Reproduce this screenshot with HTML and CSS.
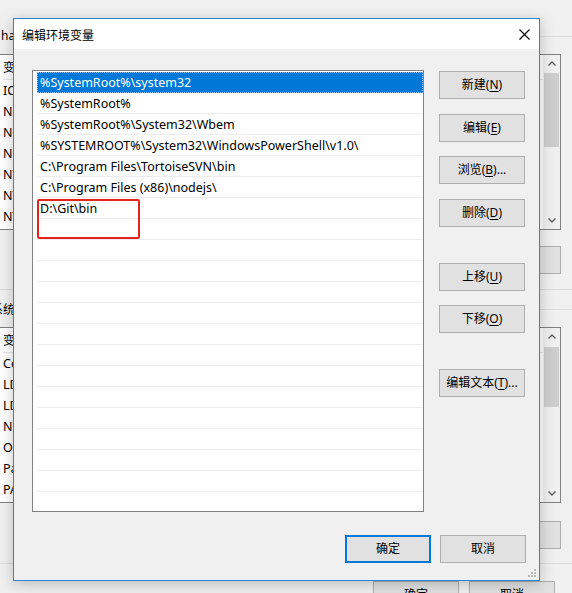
FILE: index.html
```html
<!DOCTYPE html>
<html lang="zh-CN">
<head>
<meta charset="utf-8">
<title>编辑环境变量</title>
<link rel="stylesheet" href="styles.css">
</head>
<body>
<div class="desktop">
  <div class="bgwin">
    <fieldset class="group g1">
      <legend class="glabel first">har 的用户变量(U)</legend>
      <div class="lv">
        <div class="lv-body">
          <div class="lv-head">变量</div>
          <div class="lv-row">IC_HOME</div>
          <div class="lv-row">NODE_PATH</div>
          <div class="lv-row">NODE_HOME</div>
          <div class="lv-row">NPM_HOME</div>
          <div class="lv-row">NTS_HOME</div>
          <div class="lv-row">NTS_PATH</div>
          <div class="lv-row">NTS_ROOT</div>
        </div>
        <div class="sb">
          <div class="sb-btn"><svg width="8" height="5" viewBox="0 0 8 5"><polyline points="0.5,4.5 4,1 7.5,4.5" fill="none" stroke="#606060" stroke-width="1.4"/></svg></div>
          <div class="sb-track"><div class="sb-thumb t1"></div></div>
          <div class="sb-btn"><svg width="8" height="5" viewBox="0 0 8 5"><polyline points="0.5,0.5 4,4 7.5,0.5" fill="none" stroke="#606060" stroke-width="1.4"/></svg></div>
        </div>
      </div>
      <div class="gbtns">
        <button class="btn">新建(<u>N</u>)...</button>
        <button class="btn">编辑(<u>E</u>)...</button>
        <button class="btn">删除(<u>D</u>)</button>
      </div>
    </fieldset>
    <fieldset class="group g2">
      <legend class="glabel">系统变量(S)</legend>
      <div class="lv">
        <div class="lv-body">
          <div class="lv-head">变量</div>
          <div class="lv-row">ComSpec</div>
          <div class="lv-row">LD_PATH</div>
          <div class="lv-row">LD_HOME</div>
          <div class="lv-row">NUMBER_OF_PROCESSORS</div>
          <div class="lv-row">OS</div>
          <div class="lv-row">Path</div>
          <div class="lv-row">PATHEXT</div>
        </div>
        <div class="sb">
          <div class="sb-btn"><svg width="8" height="5" viewBox="0 0 8 5"><polyline points="0.5,4.5 4,1 7.5,4.5" fill="none" stroke="#606060" stroke-width="1.4"/></svg></div>
          <div class="sb-track"><div class="sb-thumb t2"></div></div>
          <div class="sb-btn"><svg width="8" height="5" viewBox="0 0 8 5"><polyline points="0.5,0.5 4,4 7.5,0.5" fill="none" stroke="#606060" stroke-width="1.4"/></svg></div>
        </div>
      </div>
      <div class="gbtns g2btns">
        <button class="btn">新建(<u>W</u>)...</button>
        <button class="btn">编辑(<u>I</u>)...</button>
        <button class="btn">删除(<u>L</u>)</button>
      </div>
    </fieldset>
    <div class="bg-foot">
      <button class="btn">确定</button>
      <button class="btn">取消</button>
    </div>
  </div>

  <div class="dialog">
    <div class="titlebar">
      <span class="title">编辑环境变量</span>
      <span class="close"><svg width="11" height="11" viewBox="0 0 11 11"><path d="M0.5 0.5 L10.5 10.5 M10.5 0.5 L0.5 10.5" stroke="#000" stroke-width="1.1" fill="none"/></svg></span>
    </div>
    <div class="dlg-body">
      <div class="dlg-main">
        <div class="listbox">
          <div class="row sel">%SystemRoot%\system32</div>
          <div class="row">%SystemRoot%</div>
          <div class="row">%SystemRoot%\System32\Wbem</div>
          <div class="row">%SYSTEMROOT%\System32\WindowsPowerShell\v1.0\</div>
          <div class="row">C:\Program Files\TortoiseSVN\bin</div>
          <div class="row">C:\Program Files (x86)\nodejs\</div>
          <div class="row">D:\Git\bin</div>
          <div class="row"></div>
          <div class="row"></div>
          <div class="row"></div>
          <div class="row"></div>
          <div class="row"></div>
          <div class="row"></div>
          <div class="row"></div>
          <div class="row"></div>
          <div class="row"></div>
          <div class="row"></div>
          <div class="row"></div>
          <div class="row"></div>
          <div class="row"></div>
          <div class="row"></div>
          <div class="row"></div>
        </div>
        <div class="side">
          <button class="btn">新建(<u>N</u>)</button>
          <button class="btn">编辑(<u>E</u>)</button>
          <button class="btn">浏览(<u>B</u>)...</button>
          <button class="btn">删除(<u>D</u>)</button>
          <button class="btn spaced">上移(<u>U</u>)</button>
          <button class="btn">下移(<u>O</u>)</button>
          <button class="btn spaced">编辑文本(<u>T</u>)...</button>
        </div>
      </div>
      <div class="dlg-foot">
        <button class="btn default">确定</button>
        <button class="btn">取消</button>
      </div>
    </div>
    <div class="mark"></div>
    <svg class="grip" width="9" height="9" viewBox="0 0 9 9">
      <rect x="6" y="0" width="2" height="2" fill="#bcbcbc"/>
      <rect x="3" y="3" width="2" height="2" fill="#bcbcbc"/>
      <rect x="6" y="3" width="2" height="2" fill="#bcbcbc"/>
      <rect x="0" y="6" width="2" height="2" fill="#bcbcbc"/>
      <rect x="3" y="6" width="2" height="2" fill="#bcbcbc"/>
      <rect x="6" y="6" width="2" height="2" fill="#bcbcbc"/>
    </svg>
  </div>
</div>
</body>
</html>
```

FILE: styles.css
```css
* { box-sizing: border-box; }
html, body { margin: 0; padding: 0; }
body {
  font-family: "Noto Sans", "Noto Sans CJK SC", sans-serif;
  font-size: 12px;
  color: #000;
  background: #f0f0f0;
}
.desktop {
  position: relative;
  width: 572px;
  height: 593px;
  overflow: hidden;
  background: #f0f0f0;
}

/* ---------- background window ---------- */
.bgwin {
  width: 600px;
  margin-left: -20px;
  padding: 28px 0 0 0;
}
.group {
  margin: 0 4px 0 2px;
  padding: 0 14px 15px 7px;
  border: 1px solid #dcdcdc;
  min-width: 0;
}
.g2 { margin-top: 11px; padding-bottom: 14px; }
.glabel {
  padding: 0;
  margin-left: 1px;
  line-height: 16px;
  font-size: 12px;
  font-family: "Noto Sans CJK SC", sans-serif;
}
.glabel.first { margin-left: 11px; font-family: "Noto Sans", "Noto Sans CJK SC", sans-serif; }
.lv {
  margin-top: 10px;
  height: 176px;
  border: 1px solid #828282;
  background: #fff;
  display: flex;
}
.g2 .lv { margin-top: 10px; }
.lv-body { flex: 1; padding-left: 12px; overflow: hidden; }
.lv-head {
  height: 25px;
  line-height: 24px;
  border-bottom: 1px solid #e5e5e5;
  font-family: "Noto Sans CJK SC", sans-serif;
}
.lv-row { height: 21px; line-height: 21px; font-size: 12.5px; white-space: nowrap; }
.sb {
  width: 17px;
  background: #f0f0f0;
  display: flex;
  flex-direction: column;
}
.sb-btn { height: 17px; display: flex; align-items: center; justify-content: center; }
.sb-track { flex: 1; padding: 0 1px; }
.sb-thumb { background: #cdcdcd; }
.t1 { height: 74px; margin-top: 1px; }
.t2 { height: 60px; margin-top: 2px; }
.gbtns {
  display: flex;
  justify-content: flex-end;
  gap: 9px;
  margin-top: 16px;
}
.g2btns { margin-top: 18px; }
.bg-foot {
  display: flex;
  justify-content: flex-end;
  gap: 10px;
  margin-top: 17px;
  padding-right: 25px;
}

.btn {
  width: 86px;
  height: 28px;
  padding: 0;
  border: 1px solid #adadad;
  background: #e1e1e1;
  font-family: "Noto Sans", "Noto Sans CJK SC", sans-serif;
  font-size: 12px;
  color: #000;
  line-height: 26px;
}
.btn u { text-decoration-thickness: 1px; text-underline-offset: 2px; }

/* ---------- foreground dialog ---------- */
.dialog {
  position: absolute;
  left: 13px;
  top: 18px;
  width: 527px;
  height: 563px;
  border: 1px solid #2b87d3;
  background: #f0f0f0;
  box-shadow: 0 3px 14px rgba(0, 0, 0, 0.22);
  display: flex;
  flex-direction: column;
}
.titlebar {
  height: 30px;
  background: #fff;
  display: flex;
  align-items: center;
  justify-content: space-between;
  flex: none;
}
.title {
  padding-left: 8px;
  font-family: "Noto Sans CJK SC", sans-serif;
  font-size: 12px;
}
.close {
  width: 29px;
  height: 30px;
  display: flex;
  align-items: center;
  justify-content: center;
}
.dlg-body {
  flex: 1;
  padding: 21px 13px 0 18px;
  display: flex;
  flex-direction: column;
}
.dlg-main { display: flex; }
.listbox {
  width: 392px;
  height: 442px;
  border: 1px solid #828282;
  background: #fff;
  padding: 1px 0 0 4px;
  overflow: hidden;
}
.row {
  height: 21px;
  line-height: 21px;
  border-bottom: 1px solid #ececec;
  padding-left: 3px;
  font-size: 12.5px;
  white-space: nowrap;
}
.row.sel {
  background: #0078d7;
  color: #fff;
  border-bottom-color: #0078d7;
  outline: 1px dotted rgba(255, 255, 255, 0.55);
  outline-offset: -1px;
}
.side {
  margin-left: 15px;
  padding-top: 1px;
  display: flex;
  flex-direction: column;
  gap: 14.6px;
}
.side .spaced { margin-top: 21.4px; }
.dlg-foot {
  margin-top: 23px;
  display: flex;
  justify-content: flex-end;
  gap: 9px;
}
.btn.default { border: 2px solid #0078d7; line-height: 24px; }

.mark {
  position: absolute;
  left: 23px;
  top: 180px;
  width: 103px;
  height: 40px;
  border: 2px solid #e3241c;
  border-radius: 2px;
}
.grip {
  position: absolute;
  right: 2px;
  bottom: 2px;
}
```
